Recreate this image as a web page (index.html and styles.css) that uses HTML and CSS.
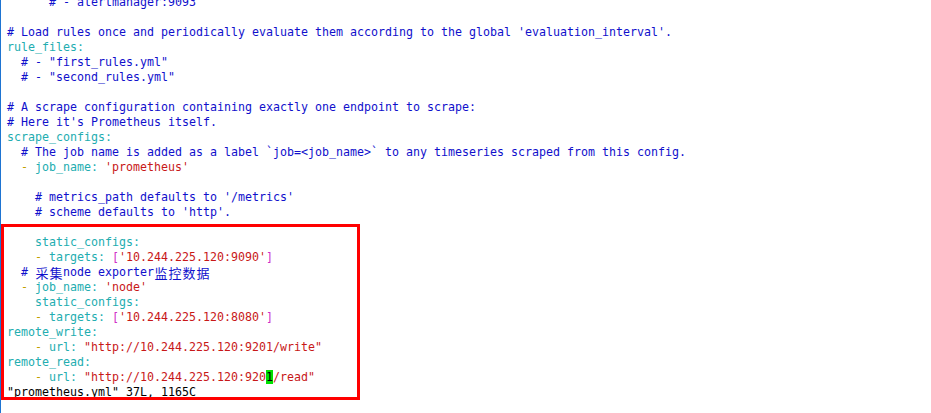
FILE: index.html
```html
<!DOCTYPE html>
<html>
<head>
<meta charset="utf-8">
<link rel="stylesheet" href="styles.css">
</head>
<body>
<div class="screen">
<pre class="term"><span class="c">      # - alertmanager:9093</span>

<span class="c"># Load rules once and periodically evaluate them according to the global 'evaluation_interval'.</span>
<span class="k">rule_files:</span>
<span class="c">  # - "first_rules.yml"</span>
<span class="c">  # - "second_rules.yml"</span>

<span class="c"># A scrape configuration containing exactly one endpoint to scrape:</span>
<span class="c"># Here it's Prometheus itself.</span>
<span class="k">scrape_configs:</span>
<span class="c">  # The job name is added as a label `job=&lt;job_name&gt;` to any timeseries scraped from this config.</span>
  <span class="d">-</span> <span class="k">job_name:</span> <span class="s">'prometheus'</span>

<span class="c">    # metrics_path defaults to '/metrics'</span>
<span class="c">    # scheme defaults to 'http'.</span>

    <span class="k">static_configs:</span>
    <span class="d">-</span> <span class="k">targets:</span> <span class="b">[</span><span class="s">'10.244.225.120:9090'</span><span class="b">]</span>
<span class="c">  # <span class="w">采</span><span class="w">集</span>node exporter<span class="w">监</span><span class="w">控</span><span class="w">数</span><span class="w">据</span></span>
  <span class="d">-</span> <span class="k">job_name:</span> <span class="s">'node'</span>
    <span class="k">static_configs:</span>
    <span class="d">-</span> <span class="k">targets:</span> <span class="b">[</span><span class="s">'10.244.225.120:8080'</span><span class="b">]</span>
<span class="k">remote_write:</span>
    <span class="d">-</span> <span class="k">url:</span> <span class="s">"http://10.244.225.120:9201/write"</span>
<span class="k">remote_read:</span>
    <span class="d">-</span> <span class="k">url:</span> <span class="s">"http://10.244.225.120:920</span><span class="cur">1</span><span class="s">/read"</span>
<span class="st">"prometheus.yml" 37L, 1165C</span></pre>
<div class="mark"></div>
</div>
</body>
</html>
```
FILE: styles.css
```css
html, body {
  margin: 0;
  padding: 0;
  background: #ffffff;
  overflow: hidden;
}
.screen {
  position: relative;
  width: 931px;
  height: 413px;
  border-left: 1px solid #1e74d2;
  box-sizing: border-box;
  overflow: hidden;
}
.term {
  margin: -5px 0 0 6px;
  font-family: "DejaVu Sans Mono", monospace;
  font-size: 11.63px;
  line-height: 15px;
  color: #000000;
  white-space: pre;
}
.c { color: #1010cc; }
.k { color: #22adb0; }
.s { color: #c81818; }
.d { color: #c0a000; }
.b { color: #d030c8; }
.st { color: #000000; }
.w {
  display: inline-block;
  width: 14px;
  font-family: "Noto Sans CJK SC", sans-serif;
  font-size: 13px;
  text-align: center;
  line-height: 15px;
  vertical-align: top;
}
.cur {
  background: #00e000;
  color: #000000;
}
.mark {
  position: absolute;
  left: 0;
  top: 224px;
  width: 359px;
  height: 176px;
  border: 3px solid #ff0000;
  box-sizing: border-box;
}
```
